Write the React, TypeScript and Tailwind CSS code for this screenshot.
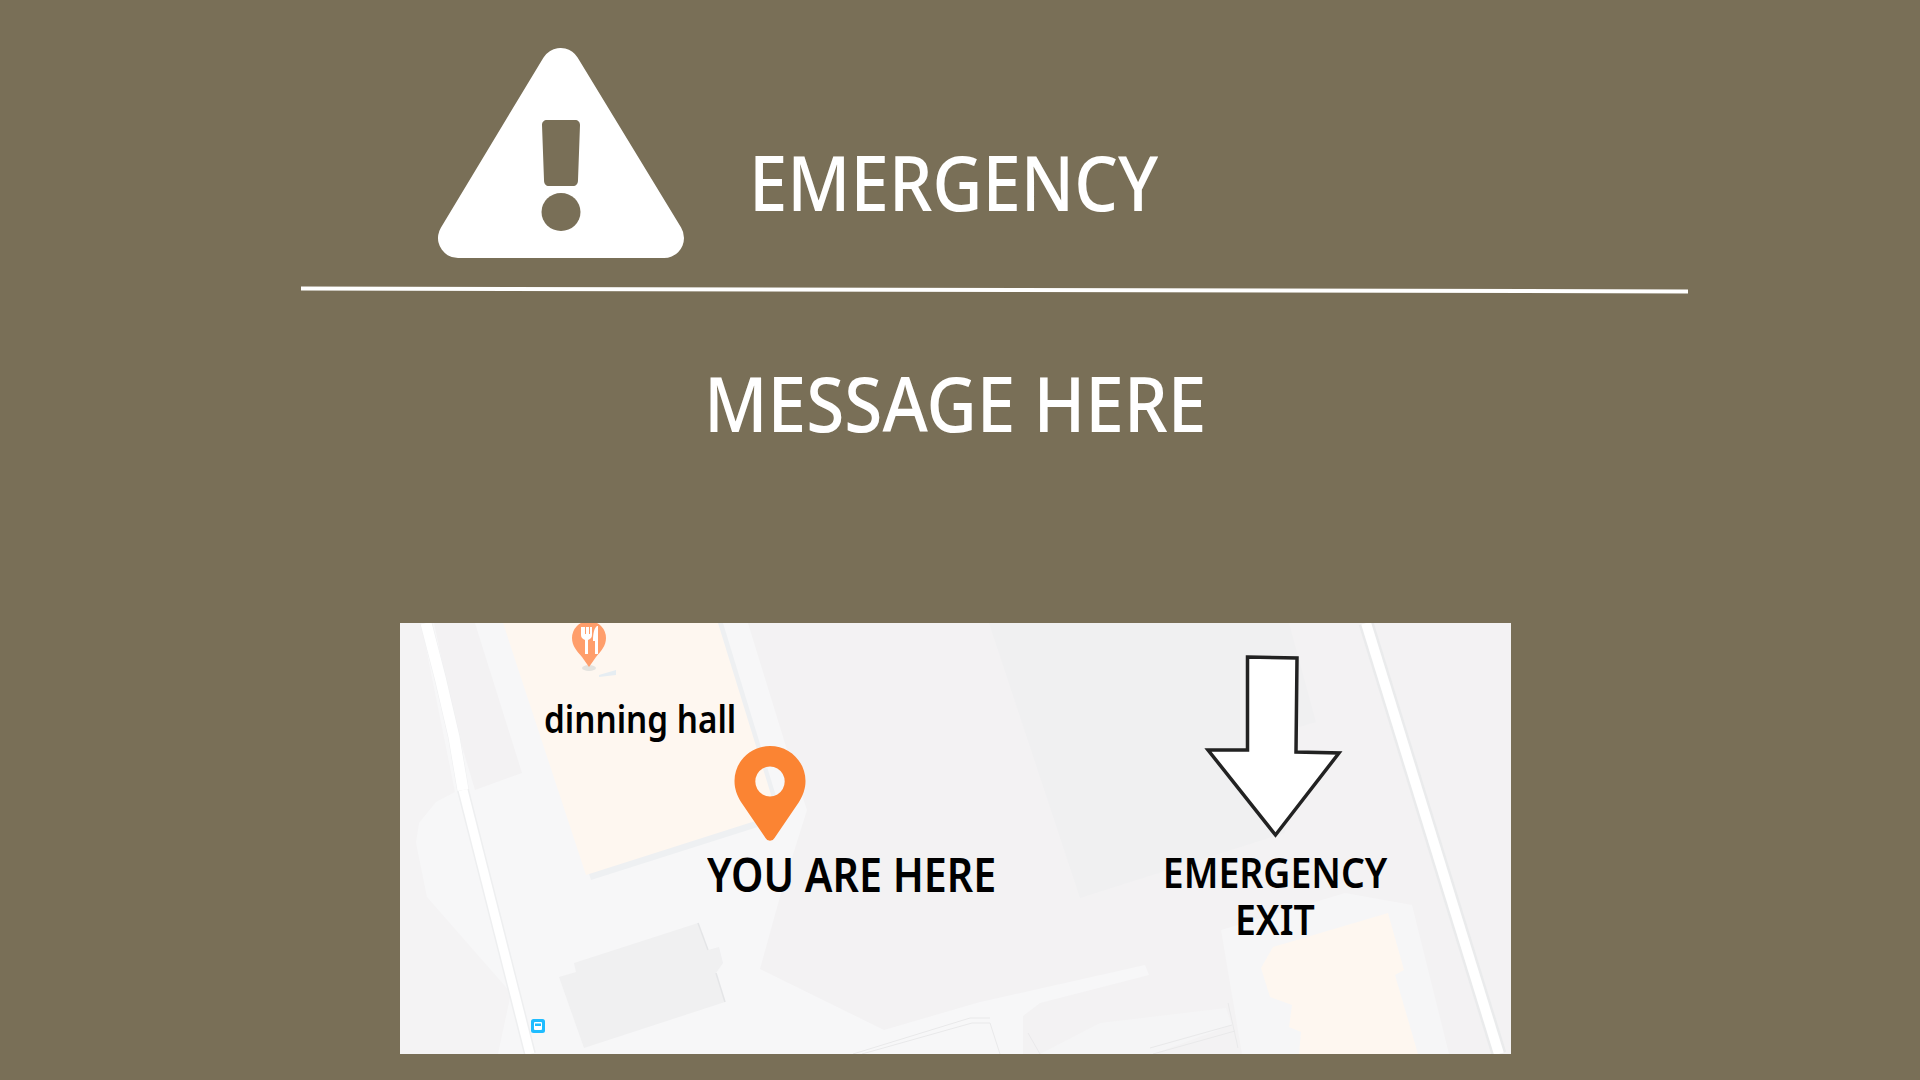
import React from 'react';

/* emergency notice: header, message and a little floor map */

const MapDrawing: React.FC = () => (
  <svg className="absolute inset-0" width="1111" height="431" viewBox="0 0 1111 431" fill="none">
    {/* ground */}
    <polygon points="34,0 75,0 122,150 75,167 55,100" fill="#f3f2f3" />
    <polygon points="0,0 21,0 55,169 36,179 19,200 16,220 27,274 111,370 98,431 0,431" fill="#f4f3f4" />
    <polygon points="348,0 1112,0 1112,431 623,431 623,393 640,380 749,352 745,342 580,379 484,407 360,346 381,270 407,187 387,127" fill="#f3f2f3" />
    <polygon points="589,0 889,0 916,99 896,105 885,210 680,275" fill="#f0f0f1" />
    <polygon points="640,431 753,431 832,402 826,385 700,400" fill="#f5f5f6" />
    <polygon points="821,307 945,270 1012,282 1049,431 842,431" fill="#f6f6f7" />

    {/* dining hall */}
    <polygon points="108,0 323,0 383,196 191,257" fill="#eef0f2" />
    <polygon points="103,0 318,0 377,191 186,252" fill="#fef7f0" />
    <polygon points="199,52 216,47 216,52 199,54" fill="#e6edf2" />

    {/* building bottom left */}
    <polygon points="298,300 308,327 319,324 323,340 316,350 325,379 184,425 159,354 176,349 174,340" fill="#f0f0f1" />
    <polyline points="298,300 308,327" stroke="#e4e5e7" strokeWidth="1.500" />
    <polyline points="316,350 325,379" stroke="#e4e5e7" strokeWidth="1.500" />

    {/* building bottom right */}
    <polygon points="873,324 988,290 1004,347 995,352 1018,431 899,431 901,409 889,404 892,382 870,374 861,345" fill="#fef7f0" />

    {/* lanes */}
    <polyline points="453,431 570,395 590,395" stroke="#e9e9ea" strokeWidth="1" />
    <polyline points="462,431 572,400 590,400 600,431" stroke="#e9e9ea" strokeWidth="1" />
    <polyline points="628,410 640,431" stroke="#e9e9ea" strokeWidth="1" />
    <polyline points="753,431 835,408" stroke="#e9e9ea" strokeWidth="1" />
    <polyline points="750,425 832,402" stroke="#e9e9ea" strokeWidth="1" />
    <polyline points="828,380 838,425" stroke="#e9e9ea" strokeWidth="1" />

    {/* roads */}
    <polyline points="26,0 40,54 54,114 63,167 130,431" stroke="#eeeff0" strokeWidth="12" />
    <polyline points="26,0 40,54 54,114 63,167" stroke="#ffffff" strokeWidth="11" />
    <polyline points="63,167 130,431" stroke="#ffffff" strokeWidth="9" />
    <polyline points="966,0 1099,431" stroke="#eaebec" strokeWidth="15" />
    <polyline points="966,0 1099,431" stroke="#ffffff" strokeWidth="10" />

    {/* restaurant pin */}
    <ellipse cx="189" cy="45" rx="7" ry="3" fill="#e4e3df" />
    <path d="M172 15a17 17 0 0 1 34 0c0 8-5 13-10 19l-7 10-7-10c-5-6-10-11-10-19z" fill="#ff9e6b" />
    <path d="M181 4v8c0 3 2 4 4 5v14h3V17c2-1 4-2 4-5V4h-2v7h-1V4h-3v7h-1V4z" fill="#ffffff" />
    <path d="M197 3c-3 2-4 8-4 15h2v13h3V3z" fill="#ffffff" />

    {/* bus stop */}
    <rect x="131" y="396" width="14" height="14" rx="2.500" fill="#1ebcff" />
    <rect x="134" y="399" width="8" height="8" rx="1" fill="#ffffff" />
    <rect x="135" y="400.500" width="6" height="2.500" fill="#1ebcff" />

    {/* you are here pin */}
    <path
      fillRule="evenodd"
      d="M370 123c19.500 0 35.500 15.500 35.500 35 0 8-2.500 14-6.500 21l-24.500 36a5 5 0 0 1-9 0l-24.500-36c-4-7-6.500-13-6.500-21 0-19.500 16-35 35.500-35zm0 20.500a14.700 15 0 1 0 0.010 0z"
      fill="#fb8433"
    />

    {/* exit arrow */}
    <polygon
      points="847.500,34 897,35 896,129 939,130 875.500,212 808,127 847.500,127"
      fill="#ffffff"
      stroke="#222222"
      strokeWidth="3.500"
    />
  </svg>
);

const App: React.FC = () => {
  return (
    <div className="h-screen w-full overflow-hidden bg-[#796f57] font-['Noto_Sans',sans-serif] text-white">
      <div className="flex items-center pl-[438px] pt-[48px]">
        <svg width="246" height="210" viewBox="0 0 246 210">
          <polygon points="122.500,20 20,190 226,190" fill="#ffffff" stroke="#ffffff" strokeWidth="40" strokeLinejoin="round" />
          <path d="M109 72c-3 0-5 2-5 5l2 55c0 4 2 6 5 6h24c3 0 5-2 5-6l2-55c0-3-2-5-5-5z" fill="#796f57" />
          <ellipse cx="123" cy="164" rx="19.500" ry="19" fill="#796f57" />
        </svg>
        <h1 className="ml-[65px] mt-[56px] origin-left scale-x-[0.894] whitespace-nowrap text-[77px] leading-none font-medium">
          EMERGENCY
        </h1>
      </div>

      <div className="mt-[30px] ml-[301px] h-[4px] w-[1387px] rotate-[0.12deg] bg-white" />

      <p className="mt-[72px] ml-[704px] origin-left scale-x-[0.9] whitespace-nowrap text-[77px] leading-none font-medium">
        MESSAGE HERE
      </p>

      <div className="relative mt-[182px] ml-[399.5px] h-[431px] w-[1111px] overflow-hidden bg-[#f7f7f8] text-black">
        <MapDrawing />
        <span className="absolute top-[76px] left-[144px] origin-left scale-x-[0.875] whitespace-nowrap text-[38px] leading-none font-semibold">
          dinning hall
        </span>
        <span className="absolute top-[228px] left-[307px] origin-left scale-x-[0.895] whitespace-nowrap text-[46px] leading-none font-semibold">
          YOU ARE HERE
        </span>
        <div className="absolute top-[225px] left-[763px] flex w-[225px] flex-col items-center text-[42px] leading-[47px] font-semibold">
          <span className="scale-x-[0.89] whitespace-nowrap">EMERGENCY</span>
          <span className="scale-x-[0.89] whitespace-nowrap">EXIT</span>
        </div>
      </div>
    </div>
  );
};

export default App;
